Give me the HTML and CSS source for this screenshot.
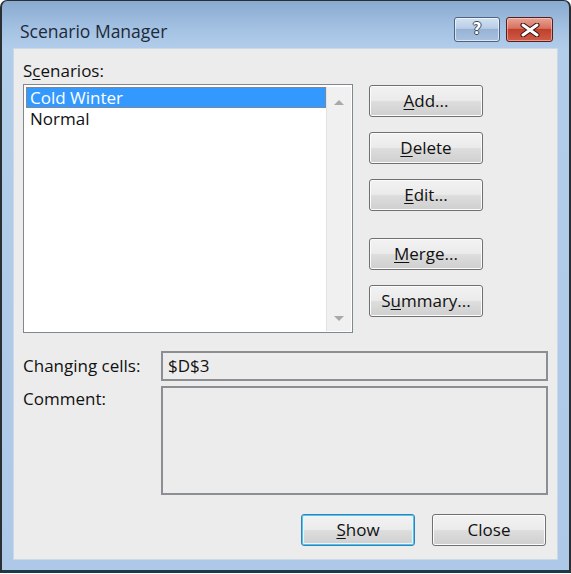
FILE: index.html
```html
<!DOCTYPE html>
<html>
<head>
<meta charset="utf-8">
<link rel="stylesheet" href="styles.css">
</head>
<body>
<div class="window">
  <div class="titlebar">
    <div class="title">Scenario Manager</div>
    <div class="caption-btns">
      <div class="cap help"><span class="q">?</span></div>
      <div class="cap close">
        <svg width="22" height="14" viewBox="0 0 22 14">
          <path d="M4 2 L18 12 M18 2 L4 12" stroke="#3a1010" stroke-width="5" stroke-linecap="round"/>
          <path d="M4 2 L18 12 M18 2 L4 12" stroke="#ffffff" stroke-width="3" stroke-linecap="round"/>
        </svg>
      </div>
    </div>
  </div>
  <div class="client">
    <div class="label top-label">S<u>c</u>enarios:</div>
    <div class="main-row">
      <div class="listbox">
        <div class="items">
          <div class="item selected">Cold Winter</div>
          <div class="item">Normal</div>
        </div>
        <div class="scrollbar">
          <span class="arrow up"></span>
          <span class="arrow down"></span>
        </div>
      </div>
      <div class="side-btns">
        <div class="btn"><u>A</u>dd...</div>
        <div class="btn"><u>D</u>elete</div>
        <div class="btn"><u>E</u>dit...</div>
        <div class="btn gap-top"><u>M</u>erge...</div>
        <div class="btn">S<u>u</u>mmary...</div>
      </div>
    </div>
    <div class="fields">
      <div class="label field-label">Changing cells:</div>
      <div class="input">$D$3</div>
      <div class="label field-label comment-label">Comment:</div>
      <div class="textarea"></div>
    </div>
    <div class="bottom-btns">
      <div class="btn default"><u>S</u>how</div>
      <div class="btn">Close</div>
    </div>
  </div>
</div>
</body>
</html>
```
FILE: styles.css
```css
html, body {
  margin: 0;
  padding: 0;
  background: #ffffff;
}
body {
  font-family: "Open Sans", "Noto Sans", sans-serif;
  font-size: 17px;
  color: #111111;
}
.window {
  width: 571px;
  height: 573px;
  box-sizing: border-box;
  border: 1px solid #2b2f33;
  border-left-width: 2px;
  border-right-width: 2px;
  border-bottom: 3px solid #1d3b46;
  border-radius: 7px 7px 0 0;
  background: linear-gradient(to bottom, #89abd0 0px, #a6c3e4 30px, #b2cdea 48px, #aec9e7 100%);
  display: flex;
  flex-direction: column;
  padding: 0 11px 10px 11px;
  overflow: hidden;
}
.titlebar {
  height: 47px;
  display: flex;
  align-items: flex-start;
  justify-content: space-between;
  padding-right: 5px;
}
.title {
  font-size: 17.5px;
  color: #1c2a3a;
  padding-top: 18px;
  padding-left: 7px;
  line-height: 24px;
}
.caption-btns {
  display: flex;
  gap: 6px;
  padding-top: 16px;
}
.cap {
  height: 25px;
  box-sizing: border-box;
  border: 1px solid #4d6480;
  border-radius: 3px;
  display: flex;
  align-items: center;
  justify-content: center;
}
.help {
  width: 46px;
  background: linear-gradient(to bottom, #d4e2f2 0%, #b8cde6 45%, #97b2d3 50%, #a9c2e0 100%);
  box-shadow: inset 0 0 0 1px rgba(255,255,255,0.6);
}
.q {
  font-family: "DejaVu Sans", sans-serif;
  font-weight: bold;
  font-size: 15px;
  color: #ffffff;
  line-height: 1;
  text-shadow: 1px 0 0 #3a4a5c, -1px 0 0 #3a4a5c, 0 1px 0 #3a4a5c, 0 -1px 0 #3a4a5c;
}
.close {
  width: 47px;
  border-color: #5a1d1d;
  background: linear-gradient(to bottom, #e8a496 0%, #d6705e 45%, #c0402b 50%, #cf5c48 100%);
  box-shadow: inset 0 0 0 1px rgba(255,220,210,0.5);
}
.client {
  flex: 1;
  background: #ececec;
  border: 1px solid #cbd8e8;
  padding: 0 9px 0 9px;
  display: flex;
  flex-direction: column;
}
.label {
  color: #111111;
  line-height: 22px;
}
.top-label {
  margin-top: 11px;
  height: 24px;
}
u {
  text-decoration: underline;
  text-underline-offset: 2px;
}
.main-row {
  display: flex;
  gap: 16px;
  margin-top: 0;
}
.listbox {
  width: 330px;
  height: 249px;
  box-sizing: border-box;
  border: 1px solid #7f878f;
  background: #ffffff;
  display: flex;
  padding: 2px 1px 1px 2px;
}
.items {
  flex: 1;
}
.item {
  height: 21px;
  line-height: 21px;
  padding-left: 4px;
  box-sizing: border-box;
}
.item.selected {
  background: #3399ff;
  color: #ffffff;
  outline: 1px dotted #c07a3a;
  outline-offset: -1px;
}
.scrollbar {
  width: 24px;
  background: #f0f0f0;
  border-left: 1px solid #e2e2e2;
  display: flex;
  flex-direction: column;
  justify-content: space-between;
  align-items: center;
  padding: 13px 0 10px 0;
}
.arrow {
  width: 0;
  height: 0;
  border-left: 5px solid transparent;
  border-right: 5px solid transparent;
}
.arrow.up {
  border-bottom: 5px solid #a9a9a9;
}
.arrow.down {
  border-top: 5px solid #a9a9a9;
}
.side-btns {
  display: flex;
  flex-direction: column;
  gap: 15px;
  padding-top: 1px;
}
.btn {
  width: 114px;
  height: 32px;
  box-sizing: border-box;
  border: 1px solid #707070;
  border-radius: 3px;
  background: linear-gradient(to bottom, #f2f2f2 0%, #ebebeb 48%, #dddddd 52%, #cfcfcf 100%);
  box-shadow: inset 0 0 0 1px #fcfcfc;
  display: flex;
  align-items: center;
  justify-content: center;
  color: #111111;
  line-height: 22px;
}
.side-btns .gap-top {
  margin-top: 12px;
}
.fields {
  display: grid;
  grid-template-columns: 138px 387px;
  grid-template-rows: 30px 109px;
  row-gap: 5px;
  margin-top: 18px;
}
.field-label {
  padding-top: 4px;
}
.comment-label {
  padding-top: 2px;
}
.input, .textarea {
  box-sizing: border-box;
  border: 2px solid #8b8e93;
  background: #ececec;
}
.input {
  padding: 2px 0 0 5px;
  line-height: 22px;
}
.bottom-btns {
  display: flex;
  justify-content: flex-end;
  gap: 17px;
  margin-top: 19px;
  padding-right: 2px;
}
.btn.default {
  border-color: #3c7fb1;
  box-shadow: inset 0 0 0 1px #48c6f4, inset 0 0 0 2px #e8f6fd;
}
```
